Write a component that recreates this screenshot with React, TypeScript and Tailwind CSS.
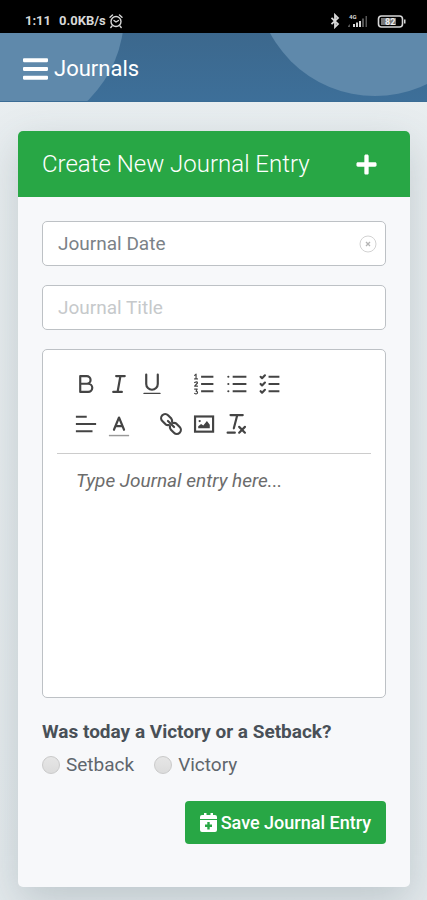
import { useState } from "react";
import type { ReactNode } from "react";
import { FaBars, FaPlus } from "react-icons/fa";

function ToolButton({ label, children }: { label: string; children: ReactNode }) {
  return (
    <button
      type="button"
      aria-label={label}
      className="flex h-10 w-[33px] items-center justify-center text-[#444]"
    >
      <svg
        viewBox="0 0 18 18"
        className="h-[26px] w-[26px] shrink-0"
        fill="none"
        stroke="currentColor"
        strokeWidth="1.5"
        strokeLinecap="round"
        strokeLinejoin="round"
      >
        {children}
      </svg>
    </button>
  );
}

function StatusBar() {
  return (
    <div className="flex h-[33px] items-end justify-between bg-black pr-5 pb-1 pl-[25px] text-[#d8d8d8]">
      <div className="flex items-center">
        <span className="text-[13px] leading-4 font-bold">1:11</span>
        <span className="ml-2 text-[13px] leading-4 font-bold">0.0KB/s</span>
        <svg viewBox="0 0 16 16" className="ml-0.5 h-4 w-4" fill="none" stroke="currentColor">
          <circle cx="8" cy="8.5" r="5" strokeWidth="1.4" />
          <path
            d="M2 4.2 4.5 2M14 4.2 11.5 2M4 13l-1.2 1.5M12 13l1.2 1.5M6 7.5l2 1.500 2.500-1.500"
            strokeWidth="1.4"
            strokeLinecap="round"
          />
        </svg>
      </div>
      <div className="flex items-center">
        <svg viewBox="0 0 12 16" className="h-4 w-3" fill="none" stroke="currentColor">
          <path d="M2.5 4.8 9 11 6 14V2l3 3-6.500 6.200" strokeWidth="1.8" />
        </svg>
        <svg viewBox="0 0 22 16" className="ml-1.5 h-4 w-[22px]" fill="currentColor">
          <text x="2" y="6" fontSize="6" fontWeight="bold">
            4G
          </text>
          <path d="M6 11h2v3H6zM9 9.500h2V14H9zM12 8h2v6h-2z" />
          <path d="M1 13l2-2v3H1zM15 5.500h2V14h-2zM18.500 3h1.500v11h-1.500z" opacity="0.4" />
        </svg>
        <svg viewBox="0 0 30 16" className="ml-2 h-4 w-[30px]" fill="none">
          <rect x="1.500" y="3" width="24" height="11" rx="3" stroke="currentColor" strokeWidth="1.600" />
          <path d="M27 6.500h1.500v4H27z" fill="currentColor" />
          <rect x="4" y="5" width="15" height="7" fill="#777" />
          <text x="8" y="12" fontSize="9" fontWeight="bold" fill="#eee">
            82
          </text>
        </svg>
      </div>
    </div>
  );
}

function Header() {
  return (
    <header className="relative h-[69px] overflow-hidden border-b border-[#3a6c95] bg-gradient-to-b from-[#3c688d] to-[#3d6f99]">
      <div className="absolute -top-[137px] -left-[114px] h-[238px] w-[238px] rounded-full bg-[#5f89ab]" />
      <div className="absolute -top-[175px] -right-[67px] h-[238px] w-[238px] rounded-full bg-[#5f89ab]" />
      <div className="relative flex h-full items-center gap-1.5 px-[23px] pt-1 text-white">
        <button type="button" aria-label="Open menu">
          <FaBars className="h-7 w-[25px]" preserveAspectRatio="none" />
        </button>
        <h1 className="text-[22px] leading-8">Journals</h1>
      </div>
    </header>
  );
}

function Toolbar() {
  return (
    <div className="flex flex-wrap gap-x-[19px] border-b border-[#ccc] px-3 pt-3.5 pb-[9px]">
      <div className="flex">
        <ToolButton label="Bold">
          <path d="M5 3.500h4.500a2.600 2.600 0 0 1 0 5.300H5zM5 8.800h5.500a2.800 2.800 0 0 1 0 5.700H5z" />
        </ToolButton>
        <ToolButton label="Italic">
          <path d="M7 3.500h6M5 14.500h6M8 14.500l2-11" />
        </ToolButton>
        <ToolButton label="Underline">
          <path d="M5 2.500v6.500a4 4 0 0 0 4 4 4 4 0 0 0 4-4V2.500" />
          <path d="M3.500 15.500h11" strokeWidth="1" />
        </ToolButton>
      </div>
      <div className="flex">
        <ToolButton label="Ordered list">
          <path d="M7 4h8.500M7 9h8.500M7 14h8.500" strokeLinecap="butt" />
          <path
            d="M2.500 3l1-.8V5.500M2.500 5.500h2M2.500 8q2-1 2 .3L2.500 10.500h2M2.500 12.500h1.800L3.500 14q1.500.2.800 1.500-.8.700-1.800 0"
            strokeWidth="0.8"
          />
        </ToolButton>
        <ToolButton label="Bullet list">
          <path d="M6 4h9.500M6 9h9.500M6 14h9.500" strokeLinecap="butt" />
          <path d="M3 4h.01M3 9h.01M3 14h.01" />
        </ToolButton>
        <ToolButton label="Check list">
          <path d="M8 4h7.500M8 9h7.500M8 14h7.500" strokeLinecap="butt" />
          <path d="M2.500 4l1 1 2-2M2.500 9l1 1 2-2M2.500 14l1 1 2-2" />
        </ToolButton>
      </div>
      <div className="flex">
        <ToolButton label="Align">
          <path d="M2 4h7.500M2 9h14M2 14h11.500" strokeLinecap="butt" />
        </ToolButton>
        <ToolButton label="Text color">
          <path d="M5.500 13 9 4.500l3.500 8.500M6.800 10.500h4.400" />
          <path d="M2 17h14" stroke="#999" strokeWidth="1" strokeLinecap="butt" />
        </ToolButton>
      </div>
      <div className="flex">
        <ToolButton label="Insert link">
          <g transform="rotate(45 9 9)">
            <path d="M8.500 10.500a2.800 2.800 0 0 1-2 1.300H3.300a2.800 2.800 0 0 1 0-5.600h3.200a2.800 2.800 0 0 1 2 1.300" />
            <path d="M9.500 7.500a2.800 2.800 0 0 1 2-1.300h3.200a2.800 2.800 0 0 1 0 5.600h-3.200a2.800 2.800 0 0 1-2-1.300" />
            <path d="M6 9h6" />
          </g>
        </ToolButton>
        <ToolButton label="Insert image">
          <rect x="2.800" y="3.800" width="12.500" height="10.500" strokeLinejoin="miter" />
          <circle cx="6" cy="7" r="0.8" fill="currentColor" stroke="none" />
          <path d="M5 12v-1.500l2-1.500 1.500 1L11 7l2 2.500V12z" fill="currentColor" stroke="none" />
        </ToolButton>
        <ToolButton label="Remove formatting">
          <path d="M4.500 2.800h8.500M9.200 2.800 6.800 12M2.500 15h5M10.500 11l4 4M14.500 11l-4 4" />
        </ToolButton>
      </div>
    </div>
  );
}

const outcomes = ["Setback", "Victory"];

function JournalForm() {
  const [date, setDate] = useState("");
  const [title, setTitle] = useState("");
  const [outcome, setOutcome] = useState("");

  return (
    <form className="px-6 pt-6 pb-[43px]" onSubmit={(e) => e.preventDefault()}>
      <div className="flex h-[45px] items-center rounded-[5px] border border-[#bdc1c5] bg-white pr-2">
        <input
          type="text"
          aria-label="Journal Date"
          placeholder="Journal Date"
          value={date}
          onChange={(e) => setDate(e.target.value)}
          className="h-full min-w-0 flex-1 bg-transparent px-[15px] text-[19px] outline-none placeholder:text-[#7b8288]"
        />
        <button type="button" aria-label="Clear date" onClick={() => setDate("")}>
          <svg viewBox="0 0 18 18" className="h-[18px] w-[18px]" fill="none">
            <circle cx="9" cy="9" r="8" stroke="#d2d2d2" />
            <path d="M7 7l4 4M11 7l-4 4" stroke="#b4b4b4" strokeWidth="1.300" />
          </svg>
        </button>
      </div>
      <input
        type="text"
        aria-label="Journal Title"
        placeholder="Journal Title"
        value={title}
        onChange={(e) => setTitle(e.target.value)}
        className="mt-[19px] block h-[45px] w-full rounded-[5px] border border-[#bdc1c5] bg-white px-[15px] text-[19px] outline-none placeholder:text-[#c6c9cb]"
      />
      <div className="mt-[19px] rounded-[5px] border border-[#bdc1c5] bg-white px-3.5">
        <Toolbar />
        <textarea
          aria-label="Journal entry"
          placeholder="Type Journal entry here..."
          className="block h-[243px] w-full resize-none px-[19px] pt-[13px] text-[19px] leading-7 outline-none placeholder:text-[#6c6c6c] placeholder:italic"
        />
      </div>

      <fieldset className="mt-5">
        <legend className="text-[19px] leading-7 font-bold text-[#495057]">
          Was today a Victory or a Setback?
        </legend>
        <div className="mt-[5px] flex gap-5">
          {outcomes.map((name) => (
            <label key={name} className="flex items-center gap-1.5 text-[19px] leading-7 text-[#5f666d]">
              <input
                type="radio"
                name="outcome"
                value={name}
                checked={outcome === name}
                onChange={() => setOutcome(name)}
                className="h-[18px] w-[18px] appearance-none rounded-full border border-[#c9c9c9] bg-gradient-to-b from-[#e6e6e6] to-[#dcdcdc] checked:border-4 checked:border-[#28a745]"
              />
              {name}
            </label>
          ))}
        </div>
      </fieldset>

      <div className="mt-[22px] flex justify-end">
        <button
          type="submit"
          className="flex h-[43px] items-center gap-1 rounded-[4px] bg-[#28a745] px-[15px] text-[18px] font-medium text-white"
        >
          <svg viewBox="0 0 17 19" className="h-[19px] w-[17px]" fill="currentColor">
            <path d="M4 0h2.500v2h4V0H13v2h2a2 2 0 0 1 2 2v2H0V4a2 2 0 0 1 2-2h2z" />
            <path
              fillRule="evenodd"
              d="M0 7h17v10a2 2 0 0 1-2 2H2a2 2 0 0 1-2-2zM7.300 9v2.500H5v2.400h2.300v2.500h2.400v-2.500H12v-2.400H9.700V9z"
            />
          </svg>
          Save Journal Entry
        </button>
      </div>
    </form>
  );
}

export default function App() {
  return (
    <div className="min-h-screen bg-gradient-to-b from-[#e9eef0] to-[#e3e9ec] font-[Roboto,sans-serif]">
      <StatusBar />
      <Header />
      <main className="overflow-hidden pt-[29px] pr-[17px] pb-[13px] pl-[18px]">
        <section className="overflow-hidden rounded-[5px] bg-[#f7f8fa] shadow-[0_14px_40px_rgba(60,80,90,0.22)]">
          <div className="flex h-[66px] items-center justify-between bg-[#28a745] pr-8 pl-6 text-white">
            <h2 className="text-[24px] leading-8 font-light">Create New Journal Entry</h2>
            <button type="button" aria-label="Add entry">
              <FaPlus className="h-[23px] w-[23px]" />
            </button>
          </div>
          <JournalForm />
        </section>
      </main>
    </div>
  );
}
